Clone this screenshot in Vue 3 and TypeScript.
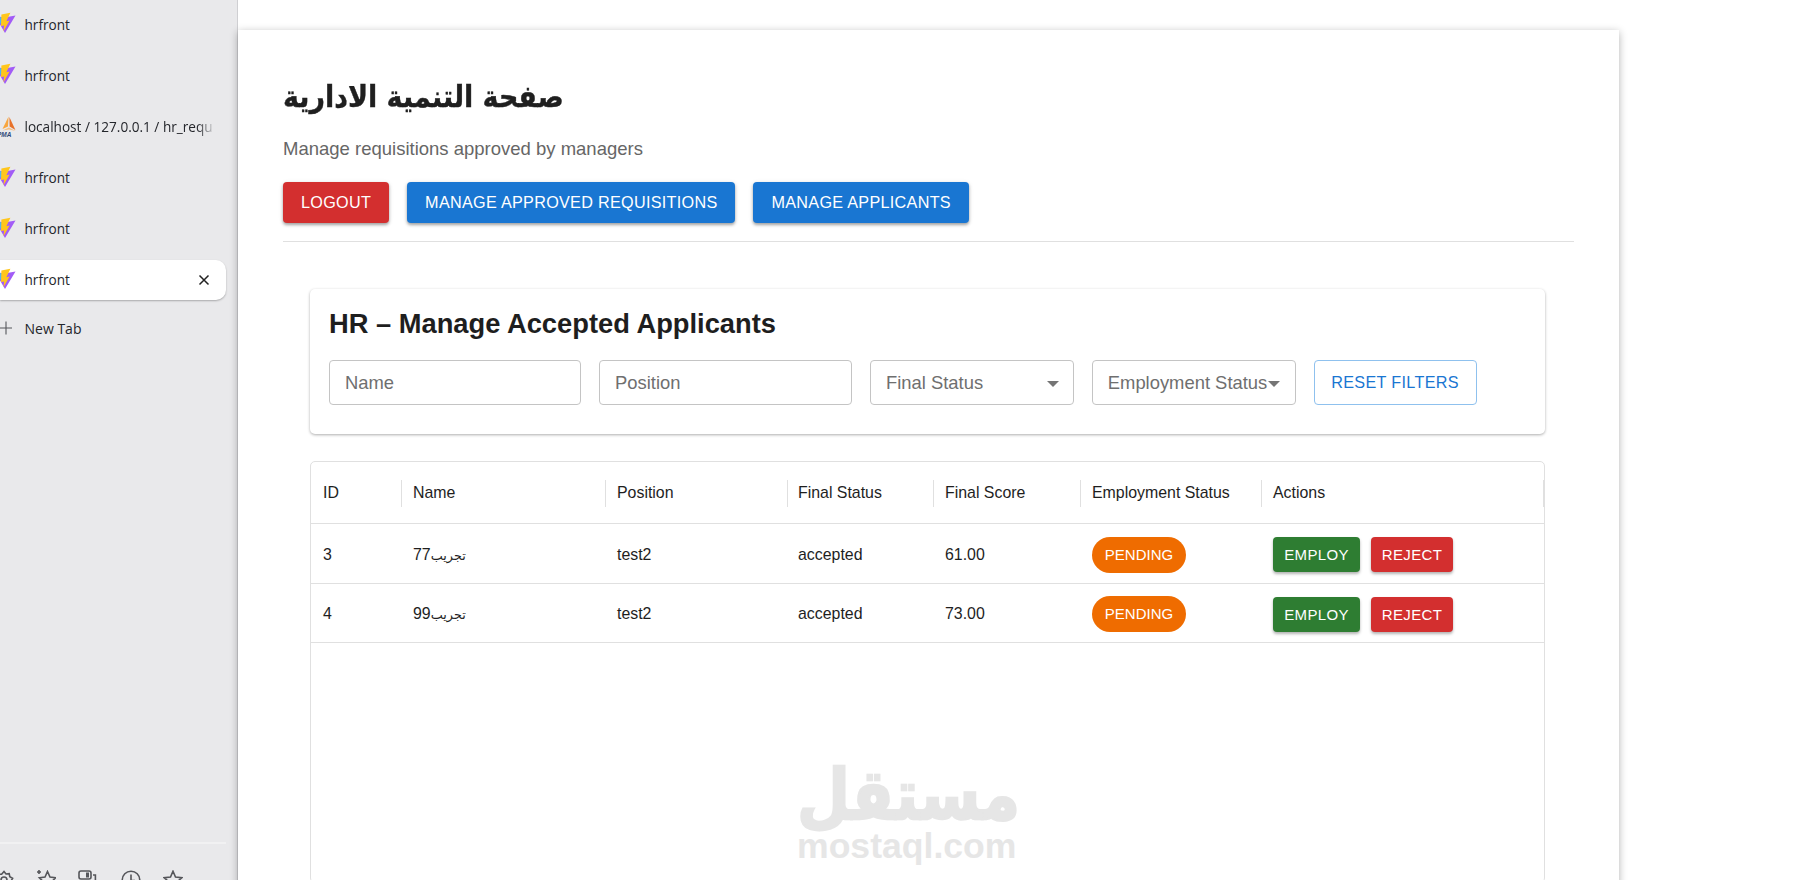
<script setup lang="ts">
interface Tab { title: string; icon: 'vite' | 'pma'; active?: boolean }
const tabs: Tab[] = [
  { title: 'hrfront', icon: 'vite' },
  { title: 'hrfront', icon: 'vite' },
  { title: 'localhost / 127.0.0.1 / hr_requ', icon: 'pma' },
  { title: 'hrfront', icon: 'vite' },
  { title: 'hrfront', icon: 'vite' },
  { title: 'hrfront', icon: 'vite', active: true },
]
const columns = [
  { label: 'ID', width: 91 },
  { label: 'Name', width: 204 },
  { label: 'Position', width: 182 },
  { label: 'Final Status', width: 146 },
  { label: 'Final Score', width: 147 },
  { label: 'Employment Status', width: 181 },
  { label: 'Actions', width: 283 },
]
const rows = [
  { id: 3, num: '77', position: 'test2', status: 'accepted', score: '61.00' },
  { id: 4, num: '99', position: 'test2', status: 'accepted', score: '73.00' },
]
</script>

<template>
  <div class="page">
    <aside class="side">
      <div class="tabs">
        <div v-for="(t, i) in tabs" :key="i" class="tab" :class="{ active: t.active, fade: t.icon === 'pma' }">
          <svg v-if="t.icon === 'vite'" class="fav" viewBox="0 0 21 21">
            <path d="M0 4 L9.5 5.6 L20.5 3.6 L10 21 Z" fill="#a25cf6" />
            <path d="M1 4.4 L7 5.4 L7 13 L4 10 Z" fill="#4db6f7" />
            <path d="M15.4 0.8 L6.4 2.4 L6 14 L9.2 13.4 L8.4 19.4 L14.6 8.6 L11.4 9.2 Z" fill="#ffc61c" />
          </svg>
          <svg v-else class="fav pma" viewBox="0 0 19 21">
            <path d="M11.6 0.5 L5.5 13 L11 10.6 Z" fill="#f8a63f" />
            <path d="M12.4 1 L18.4 14 L12.6 10.4 Z" fill="#e8722a" />
            <path d="M5.6 14.4 L12 11.6 L18.6 15 L12 13.4 Z" fill="#f6c083" />
            <text x="0" y="20.5" class="pma-text">PMA</text>
          </svg>
          <span class="tab-title">{{ t.title }}</span>
          <svg v-if="t.active" class="close" viewBox="0 0 12 12">
            <path d="M1.5 1.5 L10.5 10.5 M10.5 1.5 L1.5 10.5" />
          </svg>
        </div>
        <div class="newtab">
          <svg class="plus" viewBox="0 0 14 14"><path d="M7 0.5 V13.5 M0 7 H13" /></svg>
          <span class="tab-title">New Tab</span>
        </div>
      </div>
      <div class="side-foot">
        <div class="side-rule"></div>
        <div class="tools">
          <svg viewBox="0 0 20 20"><path d="M10 1.5 L12 4 L15.2 3.6 L15.8 6.8 L18.6 8.4 L17 11 L18.2 14 L15.2 15 L14 18 L11 17 L8 18.4 L6.4 15.6 L3.2 15 L3.6 11.8 L1.4 9.4 L4 7.6 L4.4 4.4 L7.6 4.2 Z" /><circle cx="10" cy="10" r="3" /></svg>
          <svg viewBox="0 0 20 20"><path d="M3 0 V4 M1 2 H5" /><path d="M11.5 1.5 L14 7 L19.6 7.8 L15.6 11.8 L16.6 17.6 L11.5 14.8 L6.4 17.6 L7.4 11.8 L3.4 7.8 L9 7 Z" /></svg>
          <svg viewBox="0 0 20 20"><rect x="1" y="1" width="12" height="8" rx="2" /><rect x="8" y="2.5" width="3" height="5" class="solid" /><path d="M15 5 H17.4 V13 H13" /></svg>
          <svg viewBox="0 0 20 20"><circle cx="10" cy="10" r="8.8" /><path d="M10 4.5 V10.5 H14" /></svg>
          <svg viewBox="0 0 20 20"><path d="M10 1.2 L12.5 7 L18.8 7.7 L14.1 11.9 L15.4 18 L10 15 L4.6 18 L5.9 11.9 L1.2 7.7 L7.5 7 Z" /></svg>
        </div>
      </div>
    </aside>

    <main class="main">
      <section class="paper">
        <h1 class="title">صفحة التنمية الادارية</h1>
        <p class="subtitle">Manage requisitions approved by managers</p>
        <div class="top-actions">
          <button class="btn red">LOGOUT</button>
          <button class="btn blue">MANAGE APPROVED REQUISITIONS</button>
          <button class="btn blue">MANAGE APPLICANTS</button>
        </div>
        <hr class="rule" />

        <div class="content">
          <div class="filter-card">
            <h2 class="card-title">HR – Manage Accepted Applicants</h2>
            <div class="filters">
              <div class="field w-name"><span>Name</span></div>
              <div class="field w-pos"><span>Position</span></div>
              <div class="field w-sel select"><span>Final Status</span><i class="caret"></i></div>
              <div class="field w-sel select tight"><span>Employment Status</span><i class="caret"></i></div>
              <button class="reset">RESET FILTERS</button>
            </div>
          </div>

          <div class="grid">
            <div class="grid-row head">
              <div v-for="c in columns" :key="c.label" class="cell" :style="{ width: c.width + 'px' }">{{ c.label }}</div>
            </div>
            <div v-for="r in rows" :key="r.id" class="grid-row body">
              <div class="cell" :style="{ width: columns[0].width + 'px' }">{{ r.id }}</div>
              <div class="cell" :style="{ width: columns[1].width + 'px' }"><span><span class="ar">تجريب</span>{{ r.num }}</span></div>
              <div class="cell" :style="{ width: columns[2].width + 'px' }">{{ r.position }}</div>
              <div class="cell" :style="{ width: columns[3].width + 'px' }">{{ r.status }}</div>
              <div class="cell" :style="{ width: columns[4].width + 'px' }">{{ r.score }}</div>
              <div class="cell" :style="{ width: columns[5].width + 'px' }"><span class="chip">PENDING</span></div>
              <div class="cell acts" :style="{ width: columns[6].width + 'px' }">
                <button class="mini green">EMPLOY</button>
                <button class="mini red">REJECT</button>
              </div>
            </div>
          </div>
        </div>
      </section>
    </main>

    <div class="mark">
      <div class="mark-ar">مستقل</div>
      <div class="mark-en">mostaql.com</div>
    </div>
  </div>
</template>

<style scoped>
.page { position: relative; display: flex; width: 1814px; height: 880px; overflow: hidden; background: #fff; font-family: "Liberation Sans", Arial, sans-serif; color: #1e1e1e; }
.side { width: 237px; flex: none; border-right: 1px solid #cfcfd2; background: #e9e9eb; display: flex; flex-direction: column; justify-content: space-between; font-family: "Open Sans", sans-serif; }
.tabs { padding: 4px 11px 0 0; display: flex; flex-direction: column; gap: 11.2px; }
.tab { height: 40px; display: flex; align-items: center; padding-left: 24.5px; position: relative; border-radius: 0 10px 10px 0; font-size: 13.6px; color: #24262b; }
.tab.active { background: #fff; box-shadow: 0 1px 2px rgba(0,0,0,.28); }
.fav { position: absolute; left: -5px; top: 8px; width: 21px; height: 21px; }
.fav.pma { left: -3px; width: 19px; top: 10px; }
.pma-text { font: italic 700 6.5px "Liberation Sans", sans-serif; fill: #2f4a78; }
.tab-title { white-space: nowrap; }
.fade .tab-title { -webkit-mask-image: linear-gradient(90deg, #000 172px, transparent 191px); mask-image: linear-gradient(90deg, #000 172px, transparent 191px); }
.close { position: absolute; right: 16px; top: 14px; width: 12px; height: 12px; fill: none; stroke: #222; stroke-width: 1.5; }
.newtab { height: 30px; margin-top: 2px; display: flex; align-items: center; padding-left: 24.5px; position: relative; font-size: 14px; color: #24262b; }
.plus { position: absolute; left: -1px; top: 8px; width: 14px; height: 14px; fill: none; stroke: #55575b; stroke-width: 1.1; }
.side-foot { height: 38.5px; overflow: hidden; }
.side-rule { height: 2px; width: 226px; background: #f1f1f2; }
.tools { display: flex; gap: 22.2px; margin: 26px 0 0 -6px; }
.tools svg { width: 20px; height: 20px; flex: none; fill: none; stroke: #55565a; stroke-width: 1.6; }
.tools .solid { fill: #55565a; stroke: none; }
.main { flex: 1; min-width: 0; padding-top: 30px; }
.paper { width: 1381px; min-height: 900px; padding: 45px; box-sizing: border-box; background: #fff; box-shadow: 0 2px 8px rgba(0,0,0,.3); }
.title { display: block; width: max-content; margin: 0; font-family: "DejaVu Sans", sans-serif; font-size: 30px; font-weight: 700; line-height: 44px; direction: rtl; white-space: nowrap; color: #1f1f1f; -webkit-text-stroke: .4px #1f1f1f; transform: scaleX(.897); transform-origin: left center; }
.subtitle { margin: 19px 0 0; font-size: 18.5px; line-height: 22px; color: #666; }
.top-actions { display: flex; gap: 18px; margin-top: 22px; }
.btn { height: 41px; border: none; border-radius: 4px; color: #fff; font: 400 16.2px/41px "Liberation Sans", sans-serif; letter-spacing: .29px; padding: 0 18px; box-shadow: 0 2px 3px rgba(0,0,0,.3), 0 1px 5px rgba(0,0,0,.12); white-space: nowrap; }
.btn.red { background: #d32f2f; }
.btn.blue { background: #1976d2; }
.rule { margin: 18px 0 0; border: none; height: 1px; background: #e0e0e0; }
.content { margin: 46.5px 29px 0 27px; }
.filter-card { height: 145px; box-sizing: border-box; padding: 19px; border-radius: 5px; background: #fff; box-shadow: 0 1px 3px rgba(0,0,0,.32); }
.card-title { margin: 0; font-size: 27.3px; line-height: 32px; font-weight: 700; color: #1e1e1e; }
.filters { display: flex; gap: 18px; margin-top: 20.5px; align-items: stretch; height: 45px; }
.field { box-sizing: border-box; height: 45px; border: 1px solid #c4c4c4; border-radius: 4px; display: flex; align-items: center; padding: 0 15px; font-size: 18.4px; color: #6f6f6f; position: relative; white-space: nowrap; }
.w-name { width: 252px; }
.w-pos { width: 253px; }
.w-sel { width: 203.8px; }
.caret { position: absolute; right: 14px; top: 20px; border: 6px solid transparent; border-top-color: #757575; border-bottom: none; }
.tight .caret { right: 15px; }
.reset { width: 163px; height: 45px; box-sizing: border-box; background: #fff; border: 1px solid #8fc1ee; border-radius: 4px; color: #1976d2; font: 400 16.2px "Liberation Sans", sans-serif; letter-spacing: .32px; padding: 0; }
.grid { margin-top: 27px; min-height: 420px; border: 1px solid #e0e0e0; border-radius: 5px; font-size: 15.9px; }
.grid-row { display: flex; border-bottom: 1px solid #e0e0e0; }
.grid-row.head { height: 62.5px; box-sizing: border-box; }
.grid-row.body { height: 59.5px; box-sizing: border-box; }
.cell { box-sizing: border-box; padding-left: 11px; display: flex; align-items: center; flex: none; position: relative; color: #1e1e1e; }
.cell:first-child { padding-left: 12px; }
.cell:nth-child(4) { padding-left: 10px; }
.head .cell { padding-top: 2px; }
.body .cell { padding-top: 3px; }
.ar { font-size: 12.8px; font-family: "DejaVu Sans", sans-serif; }
.head .cell::after { content: ""; position: absolute; right: 0; top: 18px; height: 27px; width: 1px; background: #e0e0e0; }
.head .cell:last-child::after { width: 2px; }
.chip { width: 94px; height: 36px; line-height: 36px; border-radius: 18px; background: #ef6c00; color: #fff; text-align: center; font-size: 15px; }
.acts { gap: 11px; }
.mini { height: 35px; padding: 0; border: none; border-radius: 4px; color: #fff; font: 400 15px "Liberation Sans", sans-serif; letter-spacing: .35px; box-shadow: 0 2px 3px rgba(0,0,0,.3); }
.mini.green { width: 87px; background: #2e7d32; }
.mini.red { width: 82px; background: #d32f2f; }
.mark { position: absolute; left: 797px; top: 760px; width: 217px; text-align: center; color: #e6e6e6; pointer-events: none; }
.mark-ar { font: 700 61px/70px "DejaVu Sans", sans-serif; -webkit-text-stroke: 2px #e6e6e6; transform: translateY(5px) scaleY(1.15); transform-origin: center bottom; }
.mark-en { font: 700 35.6px/32px "Liberation Sans", sans-serif; }
</style>
